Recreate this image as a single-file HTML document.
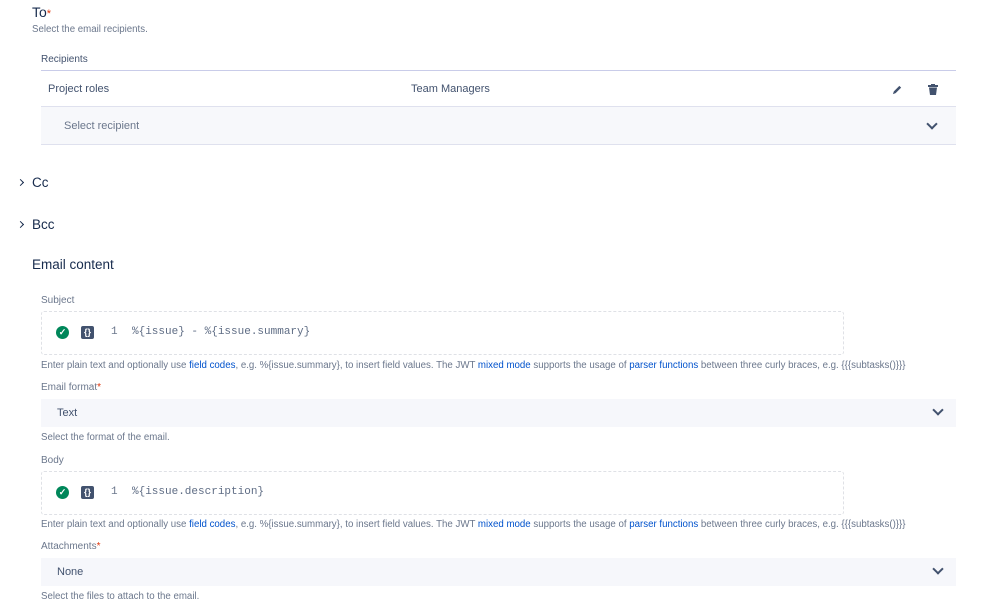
<!DOCTYPE html>
<html><head><meta charset="utf-8"><style>
body{margin:0;width:999px;height:601px;background:#fff;font-family:"Liberation Sans",sans-serif;color:#172b4d;position:relative;overflow:hidden}
.a{position:absolute;white-space:nowrap}
.s{font-size:9.7px;color:#6b778c}
.lbl{font-size:10px;color:#6b778c}
.req{color:#de350b}
.h{font-size:13.5px;font-weight:normal;color:#172b4d}
.sel{position:absolute;background:#f7f8fb;border-top:1px solid #dfe1ee;border-bottom:1px solid #dfe1ee}
.code{position:absolute;border:1px dashed #dfe1e6;border-radius:3px;background:#fff}
.mono{font-family:"Liberation Mono",monospace;font-size:11px}
a{color:#0052cc;text-decoration:none}
.chev{position:absolute;width:6px;height:6px;border-right:2px solid #42526e;border-bottom:2px solid #42526e;transform:rotate(45deg)}
.chr{position:absolute;width:4px;height:4px;border-right:1.8px solid #172b4d;border-bottom:1.8px solid #172b4d;transform:rotate(-45deg)}
.ok{position:absolute;width:13px;height:13px;border-radius:50%;background:#00875a;color:#fff;font-size:9px;text-align:center;line-height:13px;font-weight:bold}
.br{position:absolute;width:13px;height:13px;background:#42526e;border-radius:2px;color:#fff;font-size:9px;text-align:center;line-height:13px;font-weight:bold}
</style></head><body>
<div class="a h" style="left:32px;top:4px;font-size:14px">To<span class="req" style="font-size:11px">*</span></div>
<div class="a s" style="left:32px;top:24px">Select the email recipients.</div>
<div class="a lbl" style="left:41px;top:54px;color:#42526e">Recipients</div>
<div class="a" style="left:41px;top:70px;width:915px;border-top:1px solid #c9cce9"></div>
<div class="a" style="left:48px;top:83px;font-size:11px;color:#42526e">Project roles</div>
<div class="a" style="left:411px;top:83px;font-size:11px;color:#42526e">Team Managers</div>
<svg class="a" style="left:892px;top:84px" width="11" height="11" viewBox="0 0 12 12"><path d="M1 11l1-3 6-6 2 2-6 6z" fill="#42526e"/></svg>
<svg class="a" style="left:928px;top:84px" width="10" height="11" viewBox="0 0 10 11"><rect x="0" y="1" width="10" height="2" fill="#42526e"/><rect x="3" y="0" width="4" height="1.5" fill="#42526e"/><path d="M1 3.5h8l-1 7.5H2z" fill="#42526e"/></svg>
<div class="sel" style="left:41px;top:106px;width:915px;height:37px"></div>
<div class="a" style="left:64px;top:120px;font-size:11px;color:#6b778c">Select recipient</div>
<div class="chev" style="left:928px;top:120px"></div>
<div class="chr" style="left:18px;top:180px"></div>
<div class="a h" style="left:32px;top:175px">Cc</div>
<div class="chr" style="left:18px;top:222px"></div>
<div class="a h" style="left:32px;top:217px">Bcc</div>
<div class="a h" style="left:32px;top:257px">Email content</div>
<div class="a lbl" style="left:41px;top:295px">Subject</div>
<div class="code" style="left:41px;top:311px;width:801px;height:42px"></div>
<div class="ok" style="left:56px;top:326px">✓</div>
<div class="br" style="left:81px;top:326px">{}</div>
<div class="a mono" style="left:111px;top:326px;color:#6b778c">1</div>
<div class="a mono" style="left:132px;top:326px;color:#5e6c84">%{issue} - %{issue.summary}</div>
<div class="a s" style="left:41px;top:360px">Enter plain text and optionally use <a>field codes</a>, e.g. %{issue.summary}, to insert field values. The JWT <a>mixed mode</a> supports the usage of <a>parser functions</a> between three curly braces, e.g. {{{subtasks()}}}</div>
<div class="a lbl" style="left:41px;top:382px">Email format<span class="req">*</span></div>
<div class="sel" style="left:41px;top:399px;width:915px;height:28px;border:none;background:#f6f7fb"></div>
<div class="a" style="left:57px;top:407px;font-size:11px;color:#42526e">Text</div>
<div class="chev" style="left:934px;top:406px"></div>
<div class="a s" style="left:41px;top:432px">Select the format of the email.</div>
<div class="a lbl" style="left:41px;top:455px">Body</div>
<div class="code" style="left:41px;top:471px;width:801px;height:42px"></div>
<div class="ok" style="left:56px;top:486px">✓</div>
<div class="br" style="left:81px;top:486px">{}</div>
<div class="a mono" style="left:111px;top:486px;color:#6b778c">1</div>
<div class="a mono" style="left:132px;top:486px;color:#5e6c84">%{issue.description}</div>
<div class="a s" style="left:41px;top:519px">Enter plain text and optionally use <a>field codes</a>, e.g. %{issue.summary}, to insert field values. The JWT <a>mixed mode</a> supports the usage of <a>parser functions</a> between three curly braces, e.g. {{{subtasks()}}}</div>
<div class="a lbl" style="left:41px;top:541px">Attachments<span class="req">*</span></div>
<div class="sel" style="left:41px;top:558px;width:915px;height:28px;border:none;background:#f6f7fb"></div>
<div class="a" style="left:57px;top:566px;font-size:11px;color:#42526e">None</div>
<div class="chev" style="left:934px;top:565px"></div>
<div class="a s" style="left:41px;top:591px">Select the files to attach to the email.</div>
</body></html>
